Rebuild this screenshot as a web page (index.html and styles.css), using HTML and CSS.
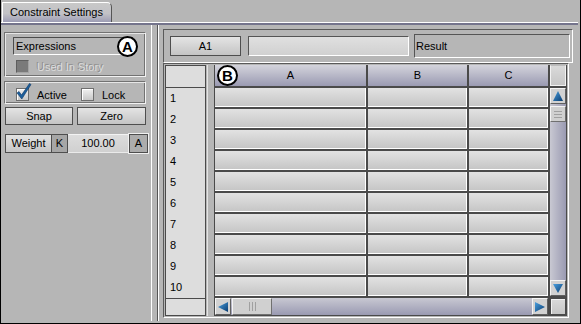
FILE: index.html
```html
<!DOCTYPE html>
<html lang="en">
<head>
    <meta charset="UTF-8">
    <title>Constraint Settings</title>
    <link rel="stylesheet" href="styles.css">
</head>
<body>
    <div class="window">
        <div class="tabbar">
            <div class="tab">Constraint Settings</div>
        </div>
        <div class="tabline"></div>

        <div class="main">
            <div class="left">
                <div class="group grp-expr">
                    <div class="field">Expressions</div>
                    <span class="badge badge-a">A</span>
                    <label class="check disabled"><span class="box box-dis"></span>Used In Story</label>
                </div>
                <div class="group grp-flags">
                    <label class="check chk-active">
                        <span class="box">
                            <svg class="tick" width="16" height="18" viewBox="0 0 16 18">
                                <path d="M1 10 L3 8.5 L5.5 12 L13.5 0.5 L15 1.5 L5.8 16 Z" fill="#1c5f9c" stroke="#0c3564" stroke-width="0.6"/>
                            </svg>
                        </span>Active</label>
                    <label class="check"><span class="box"></span>Lock</label>
                </div>
                <div class="btnrow">
                    <button type="button" class="btn snap">Snap</button>
                    <button type="button" class="btn zero">Zero</button>
                </div>
                <div class="weight">
                    <span class="w-label">Weight</span>
                    <span class="w-k">K</span>
                    <span class="w-val">100.00</span>
                    <span class="w-a">A</span>
                </div>
            </div>

            <div class="split"></div>

            <div class="right">
                <div class="topbar">
                    <button type="button" class="btn cellref">A1</button>
                    <div class="formula"></div>
                    <div class="result">Result</div>
                </div>

                <div class="sheet">
                    <div class="rowhead">
                        <div class="rh-top"></div>
                        <div class="rh-rows">
                            <div class="rh">1</div>
                            <div class="rh">2</div>
                            <div class="rh">3</div>
                            <div class="rh">4</div>
                            <div class="rh">5</div>
                            <div class="rh">6</div>
                            <div class="rh">7</div>
                            <div class="rh">8</div>
                            <div class="rh">9</div>
                            <div class="rh">10</div>
                        </div>
                        <div class="rh-foot"></div>
                    </div>
                    <div class="gutter"></div>
                    <div class="grid">
                        <span class="badge badge-b">B</span>
                        <div class="colhead">A</div>
                        <div class="colhead">B</div>
                        <div class="colhead">C</div>
                        <div class="corner"></div>

                        <div class="cells">
                            <div></div><div></div><div></div>
                            <div></div><div></div><div></div>
                            <div></div><div></div><div></div>
                            <div></div><div></div><div></div>
                            <div></div><div></div><div></div>
                            <div></div><div></div><div></div>
                            <div></div><div></div><div></div>
                            <div></div><div></div><div></div>
                            <div></div><div></div><div></div>
                            <div></div><div></div><div></div>
                        </div>

                        <div class="vscroll">
                            <div class="arrow">
                                <svg width="14" height="14" viewBox="0 0 14 14"><polygon points="7,2 12,12 2,12" class="tri"/></svg>
                            </div>
                            <div class="thumb vthumb"><i></i><i></i><i></i></div>
                            <div class="track"></div>
                            <div class="arrow">
                                <svg width="14" height="14" viewBox="0 0 14 14"><polygon points="2,3 12,3 7,12" class="tri"/></svg>
                            </div>
                        </div>

                        <div class="hscroll">
                            <div class="arrow">
                                <svg width="14" height="14" viewBox="0 0 14 14"><polygon points="2,7 12,2 12,12" class="tri"/></svg>
                            </div>
                            <div class="thumb hthumb"><i></i><i></i><i></i></div>
                            <div class="track"></div>
                            <div class="arrow">
                                <svg width="14" height="14" viewBox="0 0 14 14"><polygon points="2,2 12,7 2,12" class="tri"/></svg>
                            </div>
                        </div>
                        <div class="corner corner-b"></div>
                    </div>
                </div>
            </div>
        </div>
    </div>

    <svg width="0" height="0" style="position:absolute">
        <defs>
            <linearGradient id="blue" x1="0" y1="0" x2="1" y2="1">
                <stop offset="0" stop-color="#4aa0e0"/>
                <stop offset="1" stop-color="#0a3c70"/>
            </linearGradient>
        </defs>
    </svg>
</body>
</html>
```

FILE: styles.css
```css
body{
    margin: 0;
    font-family: "Liberation Sans", Arial, sans-serif;
    font-size: 11px;
    color: #000;
}
.window{
    width: 581px;
    height: 324px;
    box-sizing: border-box;
    background-color: #b6b6b6;
    border: 1px solid #000;
    border-top: none;
}

/* tab strip */
.tabbar{
    height: 22px;
    box-sizing: border-box;
    padding: 2px 0 0 1px;
}
.tab{
    width: 110px;
    height: 20px;
    box-sizing: border-box;
    border-top: 1px solid #fff;
    border-left: 1px solid #fff;
    border-right: 1px solid #555;
    border-top-right-radius: 5px;
    background: linear-gradient(#c8c8c8, #c2c2c6 55%, #9d9db5);
    padding-left: 7px;
    line-height: 18px;
}
.tabline{
    height: 3px;
    box-sizing: border-box;
    margin-right: 2px;
    border-top: 1px solid #fff;
    background-color: #74748c;
}

.main{
    display: flex;
    height: 298px;
}

/* left panel */
.left{
    width: 150px;
    box-sizing: border-box;
    padding: 7px 0 0 3px;
}
.group{
    width: 142px;
    box-sizing: border-box;
    border: 1px solid #727272;
    border-right-color: #f2f2f2;
    border-bottom-color: #f2f2f2;
    box-shadow: inset 1px 1px 0 #e6e6e6, inset -1px -1px 0 #727272;
}
.grp-expr{
    position: relative;
    height: 45px;
    padding: 4px 0 0 8px;
}
.field{
    width: 121px;
    height: 18px;
    box-sizing: border-box;
    border: 1px solid #4c4c4c;
    border-right-color: #fff;
    border-bottom-color: #fff;
    padding-left: 2px;
    line-height: 16px;
}
.check{
    display: flex;
    align-items: center;
    gap: 8px;
}
.grp-expr .check{
    margin: 5px 0 0 3px;
}
.box{
    position: relative;
    width: 13px;
    height: 13px;
    box-sizing: border-box;
    border: 1px solid #6e6e6e;
    background: linear-gradient(#f0f0f0, #c8c8c8);
    box-shadow: inset 1px 1px 0 #fff;
}
.box-dis{
    background: #7a7a7a;
    border-color: #5e5e5e #a4a4a4 #a4a4a4 #5e5e5e;
    box-shadow: none;
}
.disabled{
    color: #dcdcdc;
    text-shadow: -1px -1px 0 #8c8c8c;
}
.grp-flags{
    height: 23px;
    margin-top: 4px;
    padding: 4px 0 0 11px;
    display: flex;
}
.chk-active{
    width: 65px;
}
.tick{
    position: absolute;
    left: -1px;
    top: -6px;
}

.btn{
    font: inherit;
    color: #000;
    padding: 0;
    box-sizing: border-box;
    border: 1px solid #4e4e4e;
    background: linear-gradient(#e4e4e4, #c4c4c4);
}
.btnrow{
    display: flex;
    gap: 4px;
    margin: 3px 0 0 1px;
}
.snap{
    width: 68px;
    height: 18px;
}
.zero{
    width: 69px;
    height: 18px;
}
.weight{
    display: flex;
    height: 19px;
    margin: 9px 0 0 1px;
    line-height: 17px;
}
.weight span{
    box-sizing: border-box;
    height: 19px;
    text-align: center;
}
.w-label{
    width: 46px;
    border: 1px solid #4e4e4e;
    border-right: none;
    background: linear-gradient(#e2e2e2, #c6c6c6);
}
.w-k{
    width: 17px;
    border: 1px solid #4e4e4e;
    background-color: #a6a6a6;
}
.w-val{
    width: 60px;
    border-top: 1px solid #f2f2f2;
    border-bottom: 1px solid #eaeaea;
    background: linear-gradient(#dcdcdc, #d0d0d0);
}
.w-a{
    width: 19px;
    margin-left: 1px;
    border: 1px solid #4e4e4e;
    background-color: #acacac;
    box-shadow: 0 0 0 1px #f0f0f0;
}

.split{
    width: 8px;
    height: 296px;
    background: linear-gradient(to right, #fff 0 1px, transparent 1px 6px, #555 6px 7px, #fff 7px);
}

/* right panel */
.right{
    padding: 4px 0 0 4px;
}
.topbar{
    width: 410px;
    height: 34px;
    box-sizing: border-box;
    border: 1px solid #5a5a5a;
    border-right-color: #fff;
    border-bottom-color: #fff;
    display: flex;
    align-items: center;
    padding-left: 6px;
}
.cellref{
    width: 71px;
    height: 20px;
}
.formula{
    width: 161px;
    height: 20px;
    box-sizing: border-box;
    margin-left: 7px;
    border: 1px solid #555;
    border-right-color: #fff;
    border-bottom-color: #fff;
    background: linear-gradient(#e0e0e0, #d0d0d0);
}
.result{
    width: 156px;
    height: 24px;
    box-sizing: border-box;
    margin-left: 5px;
    border: 1px solid #555;
    border-right-color: #fff;
    border-bottom-color: #fff;
    padding-left: 1px;
    line-height: 22px;
}

.sheet{
    width: 406px;
    height: 255px;
    box-sizing: border-box;
    border: 1px solid #5a5a5a;
    border-right-color: #fff;
    border-bottom-color: #fff;
    padding: 1px;
    display: flex;
}
.rowhead{
    width: 41px;
    height: 251px;
    box-sizing: border-box;
    border: 1px solid #4a4a4a;
    background-color: #dddddd;
    display: flex;
    flex-direction: column;
}
.rh-top{
    height: 21px;
    border-bottom: 1px solid #4a4a4a;
}
.rh-rows{
    height: 210px;
}
.rh{
    height: 21px;
    line-height: 21px;
    padding-left: 4px;
}
.rh-foot{
    flex: 1;
    border-top: 1px solid #4a4a4a;
}
.gutter{
    width: 8px;
    background: linear-gradient(to right, transparent 1px, #e4e4e4 1px 2px, transparent 2px);
}

.grid{
    position: relative;
    width: 353px;
    height: 251px;
    box-sizing: border-box;
    padding: 0 1px 1px 1px;
    background-color: #4a4a4a;
    display: grid;
    grid-template-columns: 151px 99px 79px 16px;
    grid-template-rows: 21px 208px 17px;
    gap: 2px;
}
.colhead{
    text-align: center;
    line-height: 21px;
    background: linear-gradient(#d4d4dc, #9a9ab2);
}
.corner{
    box-sizing: border-box;
    background: linear-gradient(#dadada, #c6c6c6);
    border: 1px solid #f2f2f2;
    border-top-color: #bcbcbc;
}
.cells{
    grid-column: 1 / 4;
    display: grid;
    grid-template-columns: 151px 99px 79px;
    grid-auto-rows: 19px;
    gap: 2px;
}
.cells div{
    box-sizing: border-box;
    border-right: 1px solid #fff;
    border-bottom: 1px solid #fff;
    background: linear-gradient(#e2e2e2, #c6c6c6);
}

.arrow{
    width: 16px;
    height: 16px;
    box-sizing: border-box;
    border: 1px solid #f4f4f4;
    border-right-color: #606060;
    border-bottom-color: #606060;
    background-color: #d2d2d2;
    display: flex;
    align-items: center;
    justify-content: center;
}
.tri{
    fill: url(#blue);
}
.thumb{
    box-sizing: border-box;
    border: 1px solid #f4f4f4;
    border-right-color: #707070;
    border-bottom-color: #707070;
    background-color: #d0d0d0;
    display: flex;
    align-items: center;
    justify-content: center;
    gap: 2px;
}
.thumb i{
    display: block;
    background-color: #a0a0a0;
}
.track{
    flex: 1;
}
.vscroll{
    display: flex;
    flex-direction: column;
    background: linear-gradient(to right, #c8c8d2, #9a9ab2);
}
.vthumb{
    height: 16px;
    margin-top: 2px;
    flex-direction: column;
}
.vthumb i{
    width: 8px;
    height: 1px;
}
.hscroll{
    grid-column: 1 / 4;
    display: flex;
    background: linear-gradient(#c8c8d2, #9a9ab2);
}
.hscroll .arrow{
    height: 17px;
}
.hthumb{
    width: 40px;
    margin-left: 1px;
}
.hthumb i{
    width: 1px;
    height: 9px;
}
.corner-b{
    border: 1px solid #4a4a4a;
    box-shadow: inset 1px 1px 0 #f2f2f2;
}

/* callout badges */
.badge{
    position: absolute;
    width: 21px;
    height: 21px;
    box-sizing: border-box;
    border: 2px solid #000;
    border-radius: 50%;
    background-color: #fff;
    font-weight: bold;
    font-size: 15px;
    line-height: 17px;
    text-align: center;
}
.badge-a{
    left: 112px;
    top: 3px;
}
.badge-b{
    left: 3px;
    top: 0;
}
```
